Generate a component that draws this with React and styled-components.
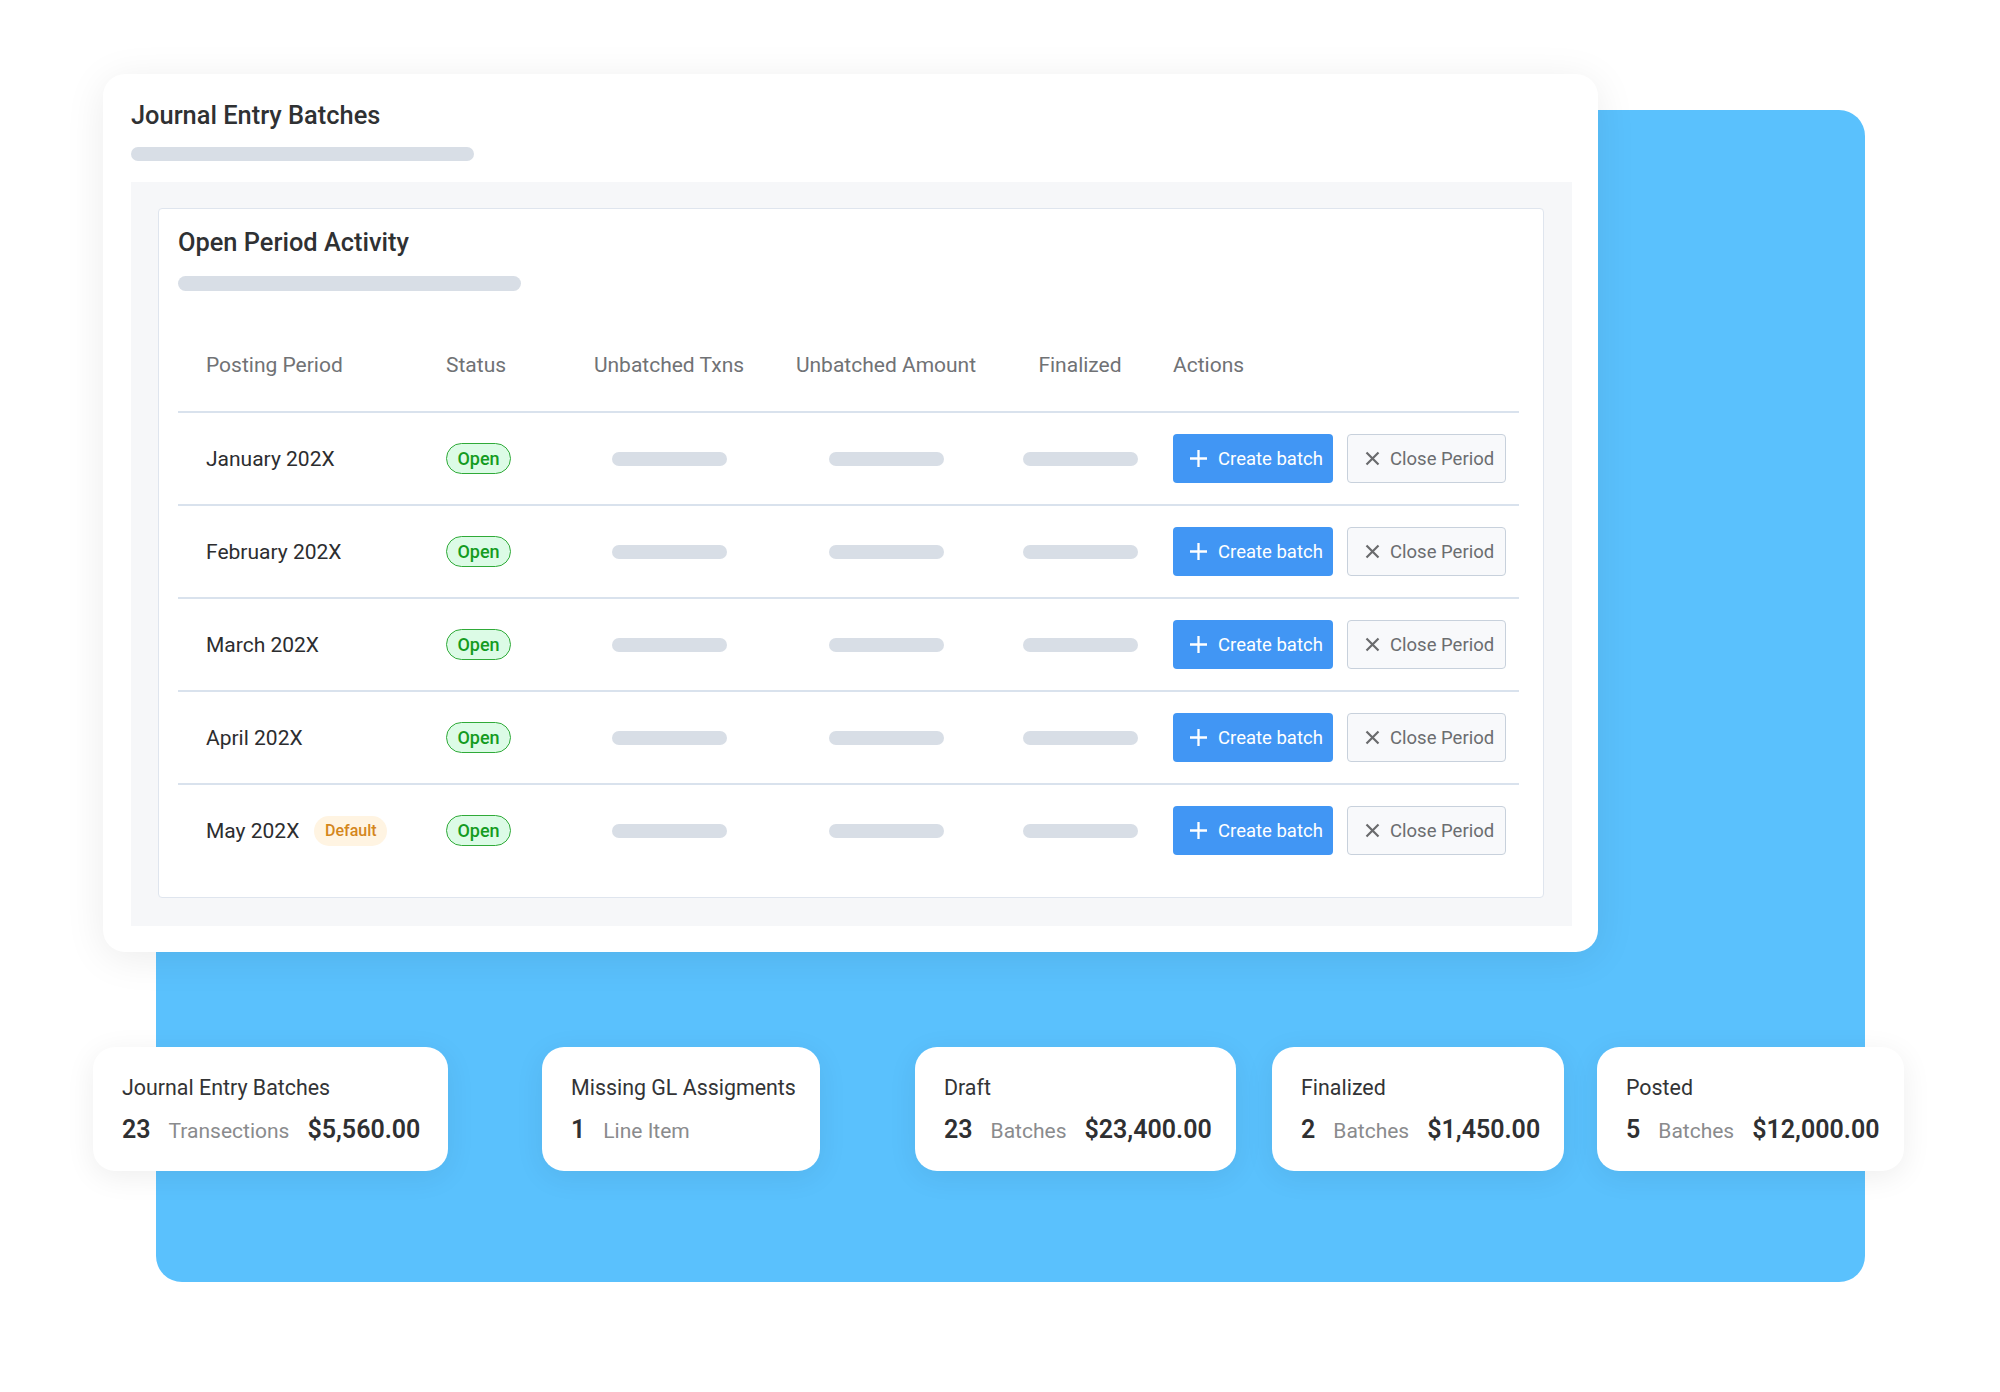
import React from 'react';
import styled, { createGlobalStyle } from 'styled-components';

const GlobalStyle = createGlobalStyle`
	* { box-sizing: border-box; }
	body {
		margin: 0;
		background: #ffffff;
		font-family: Roboto, 'Liberation Sans', Arial, sans-serif;
	}
`;

const Stage = styled.div`
	position: relative;
	width: 2000px;
	height: 1392px;
	overflow: hidden;
	background: #ffffff;
	padding-top: 74px;
`;

const Backdrop = styled.div`
	position: absolute;
	left: 156px;
	top: 110px;
	width: 1709px;
	height: 1172px;
	background: #5ac1fd;
	border-radius: 26px;
	z-index: 0;
`;

const MainCard = styled.div`
	position: relative;
	z-index: 1;
	margin-left: 103px;
	width: 1495px;
	background: #ffffff;
	border-radius: 22px;
	padding: 26px 26px 26px 28px;
	box-shadow: 0 6px 40px rgba(0, 0, 0, 0.08);
`;

const Title = styled.h1`
	margin: 0;
	font-size: 25.4px;
	line-height: 31px;
	font-weight: 500;
	color: #2f3133;
`;

const Skeleton = styled.div`
	width: ${(p) => p.$w}px;
	height: ${(p) => p.$h || 14}px;
	margin-top: ${(p) => p.$mt || 0}px;
	border-radius: 8px;
	background: #d8dee6;
`;

const GrayArea = styled.div`
	margin-top: 21px;
	background: #f6f7f9;
	padding: 26px 28px 28px 27px;
`;

const Panel = styled.div`
	background: #ffffff;
	border: 1.5px solid #dfe5ee;
	border-radius: 4px;
	padding: 18px 24px 21px 19px;
`;

const Table = styled.div`
	margin-top: 27px;
	display: flex;
	flex-direction: column;
`;

const Row = styled.div`
	display: grid;
	grid-template-columns: 240px 153px 196px 238px 150px 1fr;
	align-items: center;
	height: 93px;
	border-top: ${(p) => (p.$head ? 'none' : '2px solid #d9e2ed')};
`;

const HeadCell = styled.div`
	font-size: 21px;
	color: #707275;
	padding-left: ${(p) => p.$pl || 0}px;
	text-align: ${(p) => (p.$center ? 'center' : 'left')};
`;

const Cell = styled.div`
	display: flex;
	align-items: center;
	justify-content: ${(p) => (p.$center ? 'center' : 'flex-start')};
	padding-left: ${(p) => p.$pl || 0}px;
	gap: ${(p) => p.$gap || 0}px;
	font-size: 21px;
	color: #2c2d2f;
`;

const OpenPill = styled.span`
	display: inline-flex;
	align-items: center;
	justify-content: center;
	width: 65px;
	height: 31px;
	border-radius: 16px;
	border: 1.5px solid #2faa38;
	background: #dcfbe6;
	color: #149b1f;
	font-size: 18px;
	font-weight: 500;
`;

const DefaultPill = styled.span`
	display: inline-flex;
	align-items: center;
	justify-content: center;
	width: 73px;
	height: 30px;
	border-radius: 15px;
	background: #fff4e2;
	color: #d4861c;
	font-size: 16px;
	font-weight: 500;
`;

const Actions = styled.div`
	display: flex;
	gap: 14px;
	padding-left: 18px;
`;

const Button = styled.button`
	display: flex;
	align-items: center;
	gap: 10px;
	width: ${(p) => (p.$primary ? 160 : 159)}px;
	height: 49px;
	padding: 0 0 0 ${(p) => (p.$primary ? 16 : 17)}px;
	border-radius: 4px;
	border: ${(p) => (p.$primary ? 'none' : '1.5px solid #c8d1dc')};
	background: ${(p) => (p.$primary ? '#4196f4' : '#f8f9fb')};
	color: ${(p) => (p.$primary ? '#ffffff' : '#6b6d70')};
	font-family: inherit;
	font-size: 18.5px;
	cursor: pointer;
`;

const StatsRow = styled.div`
	position: relative;
	z-index: 1;
	display: flex;
	margin-top: 95px;
	padding-left: 93px;
`;

const StatCard = styled.div`
	flex-shrink: 0;
	width: ${(p) => p.$w}px;
	margin-left: ${(p) => p.$ml}px;
	height: 124px;
	background: #ffffff;
	border-radius: 22px;
	padding: 28px 0 0 29px;
	box-shadow: 0 6px 30px rgba(0, 0, 0, 0.07);
	white-space: nowrap;
`;

const StatTitle = styled.div`
	font-size: 21.4px;
	line-height: 26px;
	color: #333436;
`;

const StatValues = styled.div`
	display: flex;
	align-items: baseline;
	gap: 18px;
	margin-top: 14px;
	line-height: 30px;
`;

const Num = styled.span`
	font-size: 25px;
	font-weight: 600;
	color: #2f3032;
`;

const Label = styled.span`
	font-size: 21px;
	color: #8a8b8d;
`;

const PlusIcon = () => (
	<svg width="19" height="19" viewBox="0 0 19 19">
		<path d="M9.5 1v17M1 9.5h17" stroke="#ffffff" strokeWidth="2.3" fill="none" />
	</svg>
);

const XIcon = () => (
	<svg width="15" height="15" viewBox="0 0 15 15">
		<path d="M1.5 1.5l12 12M13.5 1.5l-12 12" stroke="#6a6b6d" strokeWidth="2.2" fill="none" />
	</svg>
);

const periods = [
	{ name: 'January 202X' },
	{ name: 'February 202X' },
	{ name: 'March 202X' },
	{ name: 'April 202X' },
	{ name: 'May 202X', isDefault: true },
];

const stats = [
	{ title: 'Journal Entry Batches', num: '23', label: 'Transections', amount: '$5,560.00', w: 355, ml: 0 },
	{ title: 'Missing GL Assigments', num: '1', label: 'Line Item', w: 278, ml: 94 },
	{ title: 'Draft', num: '23', label: 'Batches', amount: '$23,400.00', w: 321, ml: 95 },
	{ title: 'Finalized', num: '2', label: 'Batches', amount: '$1,450.00', w: 292, ml: 36 },
	{ title: 'Posted', num: '5', label: 'Batches', amount: '$12,000.00', w: 307, ml: 33 },
];

function App() {
	return (
		<Stage>
			<GlobalStyle />
			<Backdrop />
			<MainCard>
				<Title>Journal Entry Batches</Title>
				<Skeleton $w={343} $mt={16} />
				<GrayArea>
					<Panel>
						<Title>Open Period Activity</Title>
						<Skeleton $w={343} $h={15} $mt={18} />
						<Table>
							<Row $head>
								<HeadCell $pl={28}>Posting Period</HeadCell>
								<HeadCell $pl={28}>Status</HeadCell>
								<HeadCell $center>Unbatched Txns</HeadCell>
								<HeadCell $center>Unbatched Amount</HeadCell>
								<HeadCell $center>Finalized</HeadCell>
								<HeadCell $pl={18}>Actions</HeadCell>
							</Row>
							{periods.map((p) => (
								<Row key={p.name}>
									<Cell $pl={28} $gap={15}>
										{p.name}
										{p.isDefault && <DefaultPill>Default</DefaultPill>}
									</Cell>
									<Cell $pl={28}>
										<OpenPill>Open</OpenPill>
									</Cell>
									<Cell $center>
										<Skeleton $w={115} />
									</Cell>
									<Cell $center>
										<Skeleton $w={115} />
									</Cell>
									<Cell $center>
										<Skeleton $w={115} />
									</Cell>
									<Actions>
										<Button $primary>
											<PlusIcon />
											Create batch
										</Button>
										<Button>
											<XIcon />
											Close Period
										</Button>
									</Actions>
								</Row>
							))}
						</Table>
					</Panel>
				</GrayArea>
			</MainCard>
			<StatsRow>
				{stats.map((s) => (
					<StatCard key={s.title} $w={s.w} $ml={s.ml}>
						<StatTitle>{s.title}</StatTitle>
						<StatValues>
							<Num>{s.num}</Num>
							<Label>{s.label}</Label>
							{s.amount && <Num>{s.amount}</Num>}
						</StatValues>
					</StatCard>
				))}
			</StatsRow>
		</Stage>
	);
}

export default App;
